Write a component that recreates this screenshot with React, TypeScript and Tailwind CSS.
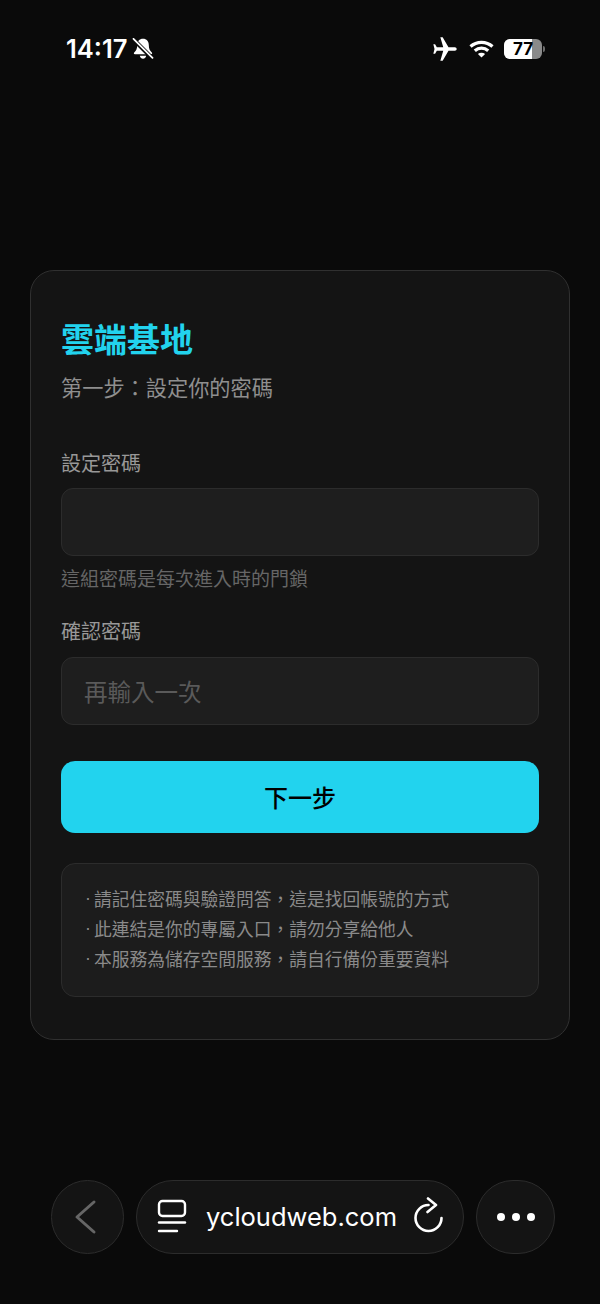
import React from 'react';
import { MdAirplanemodeActive } from 'react-icons/md';

const cjk = "[font-family:'Noto_Sans_CJK_TC','Noto_Sans_CJK_SC',sans-serif]";

const notes = [
  '請記住密碼與驗證問答，這是找回帳號的方式',
  '此連結是你的專屬入口，請勿分享給他人',
  '本服務為儲存空間服務，請自行備份重要資料',
];

const BellOff = () => (
  <svg width="22" height="22" viewBox="0 0 22 22" fill="none">
    <path d="M11 .8c-3.600 0-5.800 2.700-5.800 6.200 0 3.800-1 5.600-3 7.400-.7.700-.3 1.800.7 1.800h16.200c1 0 1.400-1.100.7-1.800-2-1.800-3-3.600-3-7.400 0-3.500-2.200-6.200-5.800-6.200z" fill="#fff" />
    <path d="M7.800 17.800c.4 1.800 1.700 3 3.200 3s2.800-1.200 3.200-3z" fill="#fff" />
    <path d="M1.500 1.500 20.500 20.500" stroke="#0a0a0a" strokeWidth="4" />
    <path d="M1.500 .8 20.500 19.800" stroke="#fff" strokeWidth="1.800" strokeLinecap="round" />
  </svg>
);

const Wifi = () => (
  <svg width="25" height="18" viewBox="0 0 25 18" fill="none" stroke="#fff" strokeWidth="3.200">
    <path d="M1.500 6.500c6.200-5.600 15.800-5.600 22 0" />
    <path d="M5.800 10.800c3.900-3.500 9.500-3.500 13.400 0" />
    <path d="M12.500 17.500 8.900 13.900c2-1.700 5.200-1.700 7.200 0z" fill="#fff" stroke="none" />
  </svg>
);

const Battery = () => (
  <div className="flex items-center gap-[1px]">
    <div className="relative flex h-[20px] w-[38px] items-center justify-center overflow-hidden rounded-[6px] bg-[#8a8a8a]">
      <div className="absolute inset-y-0 left-0 w-[28px] bg-white" />
      <span className="relative font-['Inter',sans-serif] text-[17px] leading-none font-bold text-black">77</span>
    </div>
    <div className="h-[6px] w-[2px] rounded-r-full bg-[#6e6e6e]" />
  </div>
);

const SiteIcon = () => (
  <svg width="30" height="36" viewBox="0 0 30 36" fill="none" stroke="#fff" strokeWidth="2.400" strokeLinecap="round">
    <rect x="2" y="2" width="26" height="15" rx="3.500" />
    <path d="M2 23.500h26" />
    <path d="M2 32h18" />
  </svg>
);

const Reload = () => (
  <svg width="30" height="36" viewBox="0 0 30 36" fill="none" stroke="#fff" strokeWidth="2.600" strokeLinecap="round" strokeLinejoin="round">
    <path d="M14.500 8A13 13 0 1 0 27.500 21" />
    <path d="M14 1.500 22 8l-8.500 7" />
  </svg>
);

const Field = ({ label, placeholder, gap }: { label: string; placeholder?: string; gap: string }) => (
  <div>
    <label className="block text-[20px] leading-[28px] text-[#989898]">{label}</label>
    <input
      type="text"
      placeholder={placeholder}
      className={`${gap} block h-[68px] w-full rounded-[12px] border border-[#2c2c2c] bg-[#1e1e1e] px-[22px] text-[23.500px] text-white outline-none placeholder:text-[#5a5a5a] ${cjk}`}
    />
  </div>
);

export default function App() {
  return (
    <div lang="zh-TW" className={`flex h-[1304px] w-[600px] flex-col overflow-hidden bg-[#0a0a0a] ${cjk}`}>
      {/* status bar */}
      <div className="flex h-[98px] items-start justify-between pt-[34px] pr-[55px] pl-[66px]">
        <div className="flex items-center gap-[5px]">
          <span className="font-['Inter',sans-serif] text-[25.500px] leading-[30px] font-semibold text-white">14:17</span>
          <BellOff />
        </div>
        <div className="flex h-[30px] items-center gap-[10px]">
          <MdAirplanemodeActive className="rotate-90 text-[28px] text-white" />
          <Wifi />
          <Battery />
        </div>
      </div>

      {/* card */}
      <div className="mx-[30px] mt-[172px] h-[770px] rounded-[24px] border border-[#303030] bg-[#141414] px-[30px] pt-[45px]">
        <h1 className="text-[33px] leading-[44px] font-bold text-[#22d3ee]">雲端基地</h1>
        <p className="mt-[12px] text-[21.200px] leading-[30px] text-[#8f8f8f]">第一步：設定你的密碼</p>

        <div className="mt-[47px]">
          <Field label="設定密碼" gap="mt-[11px]" />
          <p className="mt-[8px] text-[19px] leading-[28px] text-[#666666]">這組密碼是每次進入時的門鎖</p>
        </div>
        <div className="mt-[25px]">
          <Field label="確認密碼" placeholder="再輸入一次" gap="mt-[12px]" />
        </div>

        <button className="mt-[36px] h-[72px] w-full rounded-[14px] bg-[#22d3ee] text-[24px] font-medium text-black">下一步</button>

        <div className="mt-[30px] h-[134px] rounded-[14px] border border-[#2c2c2c] bg-[#1c1c1c] px-[23px] pt-[19px]">
          {notes.map((n) => (
            <div key={n} className="flex text-[17.750px] leading-[30px] text-[#8a8a8a]">
              <span className="w-[9px] shrink-0 font-['Liberation_Sans',sans-serif]">·</span>
              <span>{n}</span>
            </div>
          ))}
        </div>
      </div>

      {/* browser bar */}
      <div className="mt-[140px] flex items-center pl-[51px]">
        <div className="flex h-[74px] w-[73px] items-center justify-center rounded-full border border-[#2c2c2c] bg-[#141414]">
          <svg className="-translate-x-[2px]" width="24" height="36" viewBox="0 0 24 36" fill="none" stroke="#666" strokeWidth="3" strokeLinecap="round" strokeLinejoin="round">
            <path d="M20 3 3 18l17 15" />
          </svg>
        </div>
        <div className="ml-[12px] flex h-[74px] w-[328px] items-center rounded-full border border-[#2c2c2c] bg-[#141414] pl-[20px]">
          <SiteIcon />
          <span className="ml-[19px] w-[190px] font-['Inter',sans-serif] text-[25.500px] leading-none whitespace-nowrap text-white">ycloudweb.com</span>
          <span className="ml-[18px] -translate-y-[2px]"><Reload /></span>
        </div>
        <div className="ml-[12px] flex h-[74px] w-[79px] items-center justify-center gap-[7px] rounded-full border border-[#2c2c2c] bg-[#141414]">
          <span className="size-[8px] rounded-full bg-white" />
          <span className="size-[8px] rounded-full bg-white" />
          <span className="size-[8px] rounded-full bg-white" />
        </div>
      </div>
    </div>
  );
}
